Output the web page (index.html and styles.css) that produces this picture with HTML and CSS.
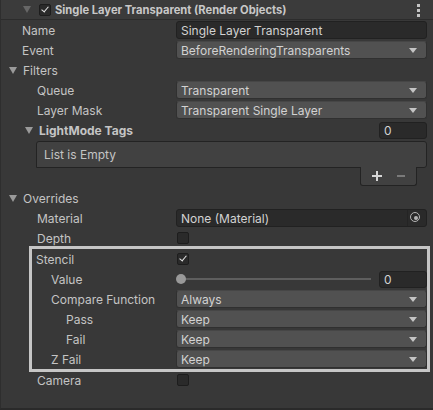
FILE: index.html
```html
<!DOCTYPE html>
<html>
<head>
<meta charset="utf-8">
<link rel="stylesheet" href="styles.css">
</head>
<body>
<div class="page">
  <div class="header">
    <span class="fold fold-dim"></span>
    <span class="check check-on"></span>
    <span class="title">Single Layer Transparent (Render Objects)</span>
    <span class="kebab"><i></i><i></i><i></i></span>
  </div>

  <div class="row"><span class="label" style="--ind:21px">Name</span><span class="field text">Single Layer Transparent</span></div>
  <div class="row"><span class="label" style="--ind:21px">Event</span><span class="field drop">BeforeRenderingTransparents</span></div>

  <div class="row"><span class="label fold-label" style="--ind:8px"><span class="fold"></span>Filters</span></div>
  <div class="row"><span class="label" style="--ind:36px">Queue</span><span class="field drop">Transparent</span></div>
  <div class="row"><span class="label" style="--ind:36px">Layer Mask</span><span class="field drop">Transparent Single Layer</span></div>
  <div class="row"><span class="label fold-label bold" style="--ind:24px"><span class="fold"></span>LightMode Tags</span><span class="spacer"></span><span class="field int">0</span></div>
  <div class="list">List is Empty</div>
  <div class="list-foot"><span class="plus"></span><span class="minus"></span></div>

  <div class="row gap-top"><span class="label fold-label" style="--ind:8px"><span class="fold"></span>Overrides</span></div>
  <div class="row"><span class="label" style="--ind:36px">Material</span><span class="field object">None (Material)<span class="picker"></span></span></div>
  <div class="row"><span class="label" style="--ind:36px">Depth</span><span class="check"></span></div>

  <div class="stencil">
    <div class="row"><span class="label" style="--ind:4px">Stencil</span><span class="check check-on"></span></div>
    <div class="row"><span class="label" style="--ind:19px">Value</span><span class="slider"><span class="knob"></span></span><span class="field int">0</span></div>
    <div class="row"><span class="label" style="--ind:19px">Compare Function</span><span class="field drop">Always</span></div>
    <div class="row"><span class="label" style="--ind:34px">Pass</span><span class="field drop">Keep</span></div>
    <div class="row"><span class="label" style="--ind:34px">Fail</span><span class="field drop">Keep</span></div>
    <div class="row"><span class="label" style="--ind:19px">Z Fail</span><span class="field drop">Keep</span></div>
  </div>

  <div class="row"><span class="label" style="--ind:36px">Camera</span><span class="check"></span></div>
</div>
</body>
</html>
```

FILE: styles.css
```css
html, body {
  margin: 0;
  padding: 0;
  background: #383838;
}
body {
  width: 433px;
  height: 410px;
  overflow: hidden;
  font-family: Inter, "Noto Sans", sans-serif;
  font-size: 12px;
  color: #c4c4c4;
}
.page {
  height: 408px;
  border-left: 1px solid #2e2e2e;
  border-bottom: 2px solid #2a2a2a;
  box-sizing: content-box;
}
.header {
  height: 19px;
  display: flex;
  align-items: center;
  background: #3b3b3b;
  border-bottom: 1px solid #2c2c2c;
  position: relative;
}
.header .fold {
  margin-left: 22px;
  margin-right: 7px;
}
.fold {
  display: inline-block;
  width: 0;
  height: 0;
  border-left: 4px solid transparent;
  border-right: 4px solid transparent;
  border-top: 7px solid #9a9a9a;
  flex: 0 0 auto;
}
.fold-dim { border-top-color: #676767; }
.title {
  font-weight: 700;
  font-size: 11.2px;
  color: #c8c8c8;
  margin-left: 4px;
}
.kebab {
  position: absolute;
  right: 13px;
  top: 4px;
  display: flex;
  flex-direction: column;
  gap: 2px;
}
.kebab i {
  display: block;
  width: 3px;
  height: 3px;
  background: #c4c4c4;
}
.row {
  height: 20px;
  display: flex;
  align-items: center;
}
.gap-top { margin-top: 2px; }
.label {
  flex: 0 0 auto;
  width: 175px;
  box-sizing: border-box;
  padding-left: var(--ind);
  white-space: nowrap;
}
.fold-label {
  display: flex;
  align-items: center;
  gap: 6px;
}
.bold { font-weight: 700; }
.field {
  flex: 1 1 auto;
  height: 18px;
  box-sizing: border-box;
  border-radius: 3px;
  margin-right: 6px;
  display: flex;
  align-items: center;
  padding-left: 4px;
  position: relative;
  white-space: nowrap;
}
.text, .int, .object {
  background: #2a2a2a;
  border: 1px solid #212121;
  color: #d2d2d2;
}
.drop {
  background: #515151;
  border: 1px solid #303030;
  border-top-color: #464646;
  color: #d2d2d2;
}
.drop::after {
  content: "";
  position: absolute;
  right: 9px;
  top: 6px;
  border-left: 4px solid transparent;
  border-right: 4px solid transparent;
  border-top: 5px solid #c4c4c4;
}
.spacer { flex: 1 1 auto; }
.int {
  flex: 0 0 48px;
  width: 48px;
  height: 17px;
}
.object .picker {
  position: absolute;
  right: 0;
  top: 0;
  bottom: 0;
  width: 18px;
  border-left: 1px solid #242424;
}
.object .picker::before {
  content: "";
  position: absolute;
  left: 2px;
  top: 2px;
  width: 8px;
  height: 8px;
  border: 1.5px solid #b4b4b4;
  border-radius: 50%;
}
.object .picker::after {
  content: "";
  position: absolute;
  left: 5.5px;
  top: 5.5px;
  width: 4px;
  height: 4px;
  background: #b4b4b4;
  border-radius: 50%;
}
.check {
  width: 12px;
  height: 12px;
  box-sizing: border-box;
  background: #2a2a2a;
  border: 1px solid #1d1d1d;
  border-radius: 2px;
  position: relative;
  flex: 0 0 auto;
  margin-left: 1px;
}
.check-on::after {
  content: "";
  position: absolute;
  left: 3px;
  top: 0px;
  width: 3px;
  height: 6px;
  border-right: 1.5px solid #e6e6e6;
  border-bottom: 1.5px solid #e6e6e6;
  transform: rotate(40deg);
}
.list {
  margin-left: 35px;
  margin-right: 6px;
  margin-top: 1px;
  height: 27px;
  box-sizing: border-box;
  background: #414141;
  border: 1px solid #232323;
  border-radius: 3px 3px 3px 0;
  display: flex;
  align-items: center;
  padding-left: 7px;
}
.list-foot {
  margin-left: 359px;
  width: 57px;
  height: 19px;
  margin-top: -1px;
  box-sizing: border-box;
  background: #414141;
  border: 1px solid #232323;
  border-top: none;
  border-radius: 0 0 3px 3px;
  display: flex;
  align-items: center;
  gap: 14px;
  padding-left: 11px;
}
.plus, .minus {
  position: relative;
  width: 10px;
  height: 10px;
  display: block;
}
.plus::before, .minus::before {
  content: "";
  position: absolute;
  left: 0;
  right: 0;
  top: 4px;
  height: 2px;
}
.plus::after {
  content: "";
  position: absolute;
  top: 0;
  bottom: 0;
  left: 4px;
  width: 2px;
  background: #d6d6d6;
}
.plus::before { background: #d6d6d6; }
.minus::before { background: #7a7a7a; left: 1px; right: 1px; }
.stencil {
  margin-left: 28px;
  margin-right: 3px;
  border: 3px solid #c6c6c6;
  margin-top: -2px;
  margin-bottom: -2px;
}
.stencil .label { width: 144px; }
.stencil .field { margin-right: 0; }
.slider {
  flex: 1 1 auto;
  height: 12px;
  position: relative;
  margin-left: 0;
  margin-right: 5px;
}
.slider::before {
  content: "";
  position: absolute;
  left: 4px;
  right: 3px;
  top: 5px;
  height: 2px;
  background: #5e5e5e;
}
.knob {
  position: absolute;
  left: 0;
  top: 1px;
  width: 10px;
  height: 10px;
  border-radius: 50%;
  background: #999999;
}
```
